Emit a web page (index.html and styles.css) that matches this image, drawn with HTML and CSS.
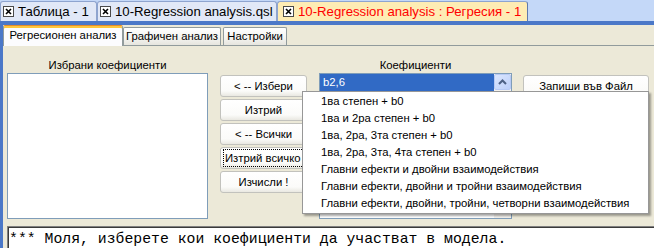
FILE: index.html
```html
<!doctype html>
<html>
<head>
	<title>Регресия</title>
	<link rel="stylesheet" href="styles.css">
</head>
<body>
<div class="doc-tabs">
	<div class="doc-tab doc-tab-table">
		<svg class="close" width="11" height="11" viewBox="0 0 11 11"><rect x="0.5" y="0.5" width="10" height="10" fill="#fff" stroke="#4a4a4a"/><path d="M3 3l5 5M8 3l-5 5" stroke="#000" stroke-width="1.6"/></svg>
		<span>Таблица - 1</span>
	</div>
	<div class="doc-tab doc-tab-file">
		<svg class="close" width="11" height="11" viewBox="0 0 11 11"><rect x="0.5" y="0.5" width="10" height="10" fill="#fff" stroke="#4a4a4a"/><path d="M3 3l5 5M8 3l-5 5" stroke="#000" stroke-width="1.6"/></svg>
		<span>10-Regression analysis.qsl</span>
	</div>
	<div class="doc-tab doc-tab-active">
		<svg class="close" width="11" height="11" viewBox="0 0 11 11"><rect x="0.5" y="0.5" width="10" height="10" fill="#fff" stroke="#4a4a4a"/><path d="M3 3l5 5M8 3l-5 5" stroke="#000" stroke-width="1.6"/></svg>
		<span>10-Regression analysis : Регресия - 1</span>
	</div>
</div>
<div class="doc-bar"></div>
<div class="window">
	<div class="page-tabs">
		<div class="page-tab page-tab-active">Регресионен анализ</div>
		<div class="page-tab page-tab-graph">Графичен анализ</div>
		<div class="page-tab page-tab-settings">Настройки</div>
	</div>
	<div class="page">
		<div class="col-left">
			<div class="label">Избрани коефициенти</div>
			<div class="listbox"></div>
		</div>
		<div class="col-buttons">
			<button class="btn">&lt; -- Избери</button>
			<button class="btn">Изтрий</button>
			<button class="btn">&lt; -- Всички</button>
			<button class="btn btn-focus"><span>Изтрий всичко</span></button>
			<button class="btn">Изчисли !</button>
		</div>
		<div class="col-mid">
			<div class="label">Коефициенти</div>
			<div class="listbox listbox-coef">
				<div class="items">
					<div class="item selected">b2,6</div>
					<div class="item selected"></div>
				</div>
				<div class="scrollbar">
					<div class="scroll-up">
						<svg width="9" height="6" viewBox="0 0 9 6"><path d="M1 5l3.5-3.5L8 5" fill="none" stroke="#4d6185" stroke-width="2"/></svg>
					</div>
				</div>
			</div>
		</div>
		<div class="col-right">
			<button class="btn btn-wide">Запиши във Файл</button>
		</div>
		<div class="menu">
			<div class="menu-item">1ва степен + b0</div>
			<div class="menu-item">1ва и 2ра степен + b0</div>
			<div class="menu-item">1ва, 2ра, 3та степен + b0</div>
			<div class="menu-item">1ва, 2ра, 3та, 4та степен + b0</div>
			<div class="menu-item">Главни ефекти и двойни взаимодействия</div>
			<div class="menu-item">Главни ефекти, двойни и тройни взаимодействия</div>
			<div class="menu-item">Главни ефекти, двойни, тройни, четворни взаимодействия</div>
		</div>
	</div>
	<div class="output">*** Моля, изберете кои коефициенти да участват в модела.</div>
</div>
</body>
</html>
```

FILE: styles.css
```css
* {
    margin: 0;
    padding: 0;
    box-sizing: border-box;
}

body {
    width: 654px;
    height: 248px;
    overflow: hidden;
    background: #ece9d8;
    font: 11.3px "Liberation Sans", Arial, sans-serif;
    color: #000;
}

/* document tabs */

.doc-tabs {
    display: flex;
    align-items: flex-end;
    height: 21px;
    background: #c4d8f8;
}

.doc-tab {
    display: flex;
    align-items: center;
    gap: 4px;
    height: 20px;
    padding-left: 2px;
    border: 1px solid #8ea4cf;
    border-bottom: none;
    border-radius: 3px 3px 0 0;
    background: #e1e8f7;
    font-size: 13.2px;
    white-space: nowrap;
    overflow: hidden;
}

.doc-tab .close {
    flex: 0 0 11px;
}

.doc-tab-table {
    width: 97px;
}

.doc-tab-file {
    width: 180px;
}

.doc-tab-active {
    width: 251px;
    padding-left: 5px;
    background: #feecb4;
    border-color: #8ea4cf #5f79ad #8ea4cf #8ea4cf;
    color: #ff0000;
}

.doc-bar {
    height: 4px;
    background: #4b78c8;
}

.window {
    height: 223px;
    border-left: 3px solid #4b78c8;
}

/* page tabs */

.page-tabs {
    display: flex;
    align-items: flex-end;
    height: 20px;
}

.page-tab {
    height: 18px;
    line-height: 17px;
    text-align: center;
    border: 1px solid #919b9c;
    border-bottom: none;
    border-radius: 2px 2px 0 0;
    background: linear-gradient(#ffffff, #f3f3ef 60%, #e6e5de);
}

.page-tab-active {
    position: relative;
    z-index: 1;
    width: 120px;
    height: 21px;
    margin-bottom: -1px;
    line-height: 19px;
    border-top: 1px solid #e68b2c;
    box-shadow: inset 0 2px 0 #ffc73c;
    background: #fcfcfe;
}

.page-tab-graph {
    width: 98px;
}

.page-tab-settings {
    width: 64px;
    margin-left: 2px;
}

/* page body */

.page {
    position: relative;
    display: flex;
    height: 181px;
    padding: 11px 0 0 4px;
    border-top: 1px solid #919b9c;
}

.label {
    height: 16px;
    line-height: 16px;
    text-align: center;
}

.listbox {
    height: 146px;
    border: 1px solid #7f9db9;
    background: #fff;
}

.col-left {
    width: 201px;
}

.col-buttons {
    display: flex;
    flex-direction: column;
    gap: 2px;
    width: 87px;
    margin-left: 12px;
    padding-top: 18px;
}

.col-mid {
    width: 193px;
    margin-left: 12px;
}

.col-right {
    width: 126px;
    margin-left: 11px;
    padding-top: 18px;
}

.btn {
    display: block;
    width: 100%;
    height: 22px;
    border: 1px solid #c2c2bd;
    border-radius: 3px;
    background: linear-gradient(#ffffff, #fbfbf9 75%, #e9e8e1);
    font: inherit;
    color: #000;
    line-height: 20px;
    text-align: center;
}

.btn-focus {
    padding: 1px 2px;
    text-align: left;
    overflow: hidden;
}

.btn-focus span {
    display: block;
    height: 18px;
    padding-left: 1px;
    line-height: 16px;
    border: 1px dotted #000;
    white-space: nowrap;
    overflow: hidden;
}

.listbox-coef {
    display: flex;
}

.items {
    flex: 1;
}

.item {
    height: 16px;
    line-height: 16px;
    padding-left: 3px;
}

.item.selected {
    background: #316ac5;
    color: #fff;
}

.scrollbar {
    flex: 0 0 17px;
    background: #f3f1ec;
}

.scroll-up {
    display: flex;
    align-items: center;
    justify-content: center;
    width: 17px;
    height: 16px;
    border: 1px solid #b7caf5;
    border-radius: 2px;
    background: linear-gradient(135deg, #dce7fe, #bccffa);
}

/* popup menu */

.menu {
    position: absolute;
    left: 299px;
    top: 45px;
    width: 347px;
    padding: 1px 0;
    border: 1px solid #979797;
    background: #fff;
    box-shadow: 2px 2px 2px rgba(0, 0, 0, 0.35);
}

.menu-item {
    height: 17px;
    line-height: 17px;
    padding-left: 18px;
    white-space: nowrap;
}

/* message box */

.output {
    height: 22px;
    margin-left: 4px;
    padding-left: 1px;
    border-top: 1px solid #808080;
    border-left: 1px solid #808080;
    box-shadow: inset 1px 1px 0 #3a3a3a;
    background: #fff;
    font: 14.8px "Liberation Mono", "Courier New", monospace;
    line-height: 25px;
    white-space: pre;
    overflow: hidden;
}
```
